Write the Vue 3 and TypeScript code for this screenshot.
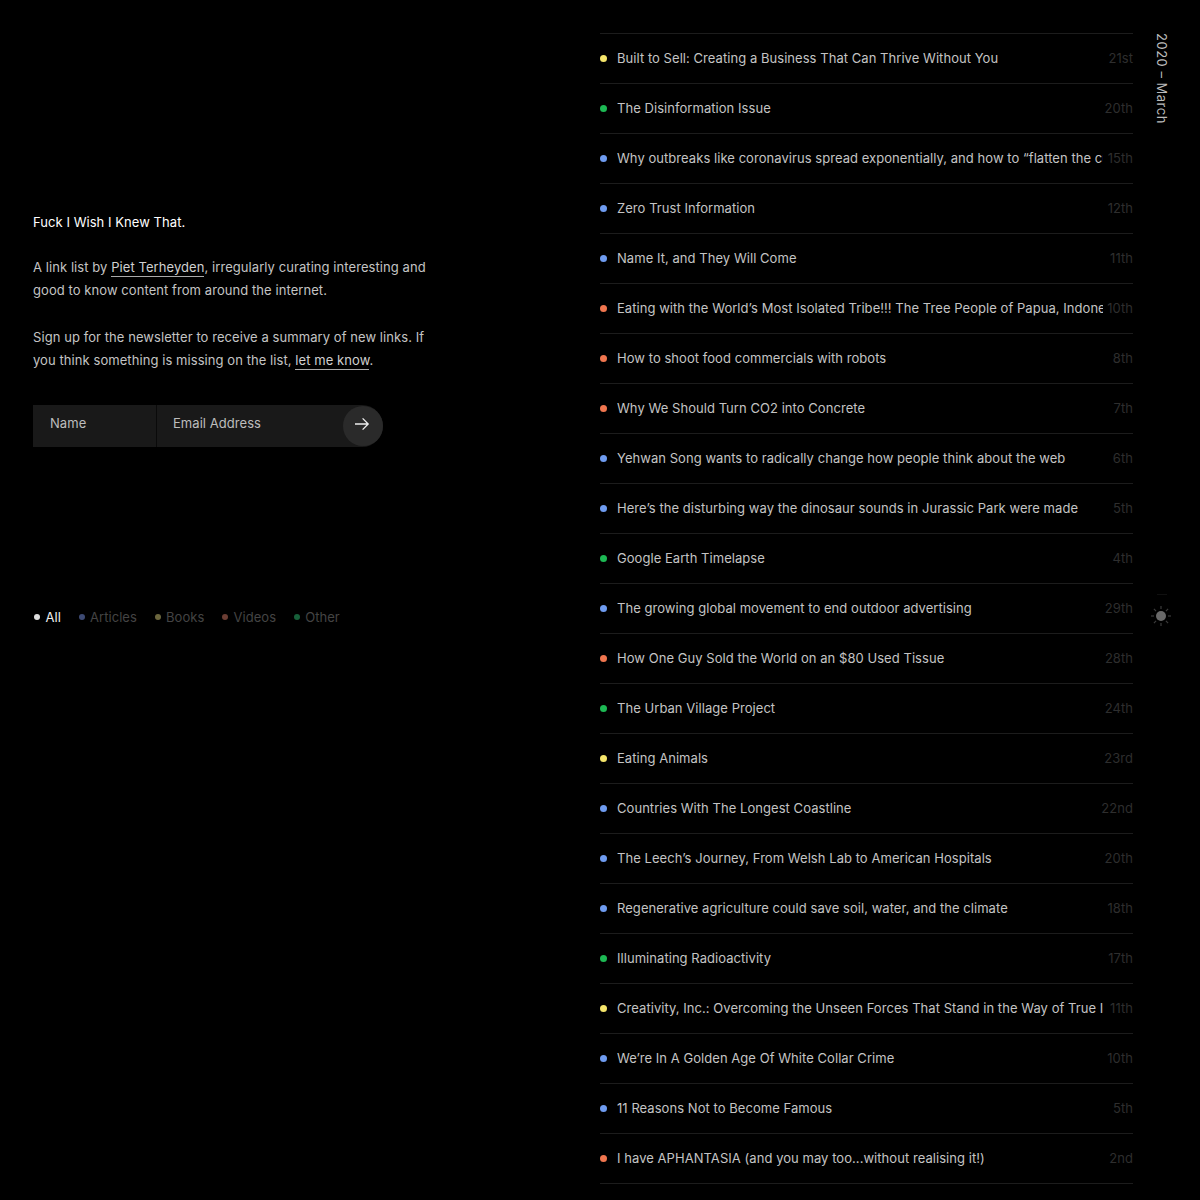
<script setup lang="ts">
interface Row { title: string; date: string; kind: 'a' | 'b' | 'v' | 'o' }
const rows: Row[] = [
  { title: 'Built to Sell: Creating a Business That Can Thrive Without You', date: '21st', kind: 'b' },
  { title: 'The Disinformation Issue', date: '20th', kind: 'o' },
  { title: 'Why outbreaks like coronavirus spread exponentially, and how to “flatten the curve”', date: '15th', kind: 'a' },
  { title: 'Zero Trust Information', date: '12th', kind: 'a' },
  { title: 'Name It, and They Will Come', date: '11th', kind: 'a' },
  { title: 'Eating with the World’s Most Isolated Tribe!!! The Tree People of Papua, Indonesia', date: '10th', kind: 'v' },
  { title: 'How to shoot food commercials with robots', date: '8th', kind: 'v' },
  { title: 'Why We Should Turn CO2 into Concrete', date: '7th', kind: 'v' },
  { title: 'Yehwan Song wants to radically change how people think about the web', date: '6th', kind: 'a' },
  { title: 'Here’s the disturbing way the dinosaur sounds in Jurassic Park were made', date: '5th', kind: 'a' },
  { title: 'Google Earth Timelapse', date: '4th', kind: 'o' },
  { title: 'The growing global movement to end outdoor advertising', date: '29th', kind: 'a' },
  { title: 'How One Guy Sold the World on an $80 Used Tissue', date: '28th', kind: 'v' },
  { title: 'The Urban Village Project', date: '24th', kind: 'o' },
  { title: 'Eating Animals', date: '23rd', kind: 'b' },
  { title: 'Countries With The Longest Coastline', date: '22nd', kind: 'a' },
  { title: 'The Leech’s Journey, From Welsh Lab to American Hospitals', date: '20th', kind: 'a' },
  { title: 'Regenerative agriculture could save soil, water, and the climate', date: '18th', kind: 'a' },
  { title: 'Illuminating Radioactivity', date: '17th', kind: 'o' },
  { title: 'Creativity, Inc.: Overcoming the Unseen Forces That Stand in the Way of True Inspiration', date: '11th', kind: 'b' },
  { title: 'We’re In A Golden Age Of White Collar Crime', date: '10th', kind: 'a' },
  { title: '11 Reasons Not to Become Famous', date: '5th', kind: 'a' },
  { title: 'I have APHANTASIA (and you may too...without realising it!)', date: '2nd', kind: 'v' },
]
const filters = [
  { label: 'All', cls: 'all' },
  { label: 'Articles', cls: 'a' },
  { label: 'Books', cls: 'b' },
  { label: 'Videos', cls: 'v' },
  { label: 'Other', cls: 'o' },
]
const rays = [0, 45, 90, 135, 180, 225, 270, 315]
</script>

<template>
  <div class="page">
    <aside class="intro">
      <h1 class="title">Fuck I Wish I Knew That.</h1>
      <p class="copy">A link list by <a>Piet Terheyden</a>, irregularly curating interesting and good to know content from around the internet.</p>
      <p class="copy">Sign up for the newsletter to receive a summary of new links. If you think something is missing on the list, <a>let me know</a>.</p>
      <form class="signup">
        <div class="field name">Name</div>
        <div class="field email">Email Address</div>
        <div class="go">
          <svg class="arrow" width="16" height="14" viewBox="0 0 16 14" fill="none" stroke="#eee" stroke-width="1.3">
            <path d="M1 7h13M8.6 1.4 14.2 7l-5.6 5.6" />
          </svg>
        </div>
      </form>
      <nav class="filters">
        <span v-for="f in filters" :key="f.label" class="filter" :class="f.cls"><i class="fdot"></i>{{ f.label }}</span>
      </nav>
    </aside>
    <main class="list">
      <div v-for="(r, i) in rows" :key="i" class="row">
        <i class="dot" :class="r.kind"></i>
        <span class="name-text">{{ r.title }}</span>
        <span class="date">{{ r.date }}</span>
      </div>
    </main>
    <div class="side">
      <div class="month">2020 – March</div>
      <div class="tick"></div>
      <svg class="sun" width="22" height="22" viewBox="0 0 22 22">
        <circle cx="11" cy="11" r="5" fill="#696969" />
        <line v-for="a in rays" :key="a" x1="11" y1="4" x2="11" y2="1" stroke="#3c3c3c" stroke-width="1.2" :transform="`rotate(${a} 11 11)`" />
      </svg>
    </div>
  </div>
</template>

<style>
html, body { margin: 0; background: #000; }
</style>

<style scoped>
.page {
  display: grid;
  grid-template-columns: 600px 533px 1fr;
  height: 1200px;
  overflow: hidden;
  background: #000;
  font-family: Inter, "Liberation Sans", sans-serif;
  font-size: 13px;
  letter-spacing: 0.05px;
  color: #c8c8c8;
}
.intro { padding: 211px 0 0 33px; }
.title { margin: 0 0 22px; font-size: 13px; font-weight: 400; line-height: 23px; color: #fff; }
.copy { margin: 0 0 23px; width: 400px; line-height: 23.4px; color: #c4c4c4; letter-spacing: 0.07px; }
.copy a { color: #d0d0d0; border-bottom: 1px solid #aaa; padding-bottom: 1px; }
.signup { display: flex; align-items: center; width: 350px; height: 42px; margin-top: 32px; position: relative; }
.field { height: 42px; line-height: 36px; background: #191919; color: #bdbdbd; box-sizing: border-box; }
.field.name { width: 124px; padding-left: 17px; border-right: 1px solid #0a0a0a; }
.field.email { width: 226px; padding-left: 16px; border-radius: 0 21px 21px 0; }
.go { position: absolute; right: 0; top: 1px; width: 40px; height: 40px; border-radius: 50%; background: #2a2a2a; display: flex; align-items: center; justify-content: center; }
.arrow { margin: 0 2px 3px 0; }
.filters { display: flex; gap: 16.6px; margin-top: 159px; line-height: 22px; }
.filter { display: flex; align-items: center; color: #444; }
.filter.all { color: #eee; }
.fdot { width: 6px; height: 6px; border-radius: 50%; margin: 0 5.5px 0 1px; }
.filter.all .fdot { background: #ddd; }
.filter.a .fdot { background: #3d4a73; }
.filter.b .fdot { background: #6b663d; }
.filter.v .fdot { background: #6b3d33; }
.filter.o .fdot { background: #17603a; }
.list { padding-top: 33px; }
.row { display: flex; align-items: center; height: 50px; box-sizing: border-box; border-top: 1px solid #1c1c1c; }
.row:last-child { height: 51px; border-bottom: 1px solid #1c1c1c; }
.dot { flex: none; width: 7px; height: 7px; border-radius: 50%; margin-right: 10px; }
.dot.a { background: #6f9cf0; }
.dot.b { background: #f5e56b; }
.dot.v { background: #f0764f; }
.dot.o { background: #1db954; }
.name-text { flex: 1; min-width: 0; white-space: nowrap; overflow: hidden; color: #c4c4c4; padding-bottom: 2px; }
.date { flex: none; width: 30px; text-align: right; white-space: nowrap; color: #2e2e2e; direction: rtl; padding-bottom: 2px; }
.side { display: flex; flex-direction: column; align-items: center; padding: 33px 9px 0 0; }
.month { writing-mode: vertical-rl; color: #bbb; letter-spacing: 0.5px; line-height: 20px; height: 500px; }
.tick { width: 10px; height: 1px; margin-top: 61px; background: #101010; }
.sun { margin: 10px 2px 0 0; }
</style>
